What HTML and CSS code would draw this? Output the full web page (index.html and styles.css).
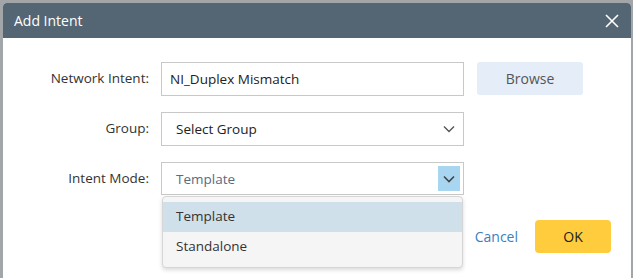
FILE: index.html
```html
<!DOCTYPE html>
<html lang="en">
<head>
    <meta charset="UTF-8">
    <meta name="viewport" content="width=device-width, initial-scale=1.0">
    <title>Add Intent</title>
    <link rel="stylesheet" href="styles.css">
</head>
<body>
    <div class="dialog">
        <header class="dialog-header">
            <h1>Add Intent</h1>
            <button class="close-button" aria-label="Close">
                <svg width="14" height="14" viewBox="0 0 14 14">
                    <path d="M1 1 L13 13 M13 1 L1 13" stroke="#fff" stroke-width="1.6" fill="none"/>
                </svg>
            </button>
        </header>

        <div class="dialog-body">
            <div class="row">
                <label class="row-label" for="intent">Network Intent:</label>
                <input id="intent" class="field" type="text" value="NI_Duplex Mismatch">
                <button class="browse-button">Browse</button>
            </div>

            <div class="row">
                <label class="row-label">Group:</label>
                <div class="field select">
                    <span>Select Group</span>
                    <span class="chevron">
                        <svg width="12" height="8" viewBox="0 0 12 8">
                            <path d="M1 1.5 L6 6.5 L11 1.5" stroke="#555" stroke-width="1.4" fill="none"/>
                        </svg>
                    </span>
                </div>
            </div>

            <div class="row">
                <label class="row-label">Intent Mode:</label>
                <div class="select-wrap">
                    <div class="field select open">
                        <span>Template</span>
                        <span class="chevron active">
                            <svg width="12" height="8" viewBox="0 0 12 8">
                                <path d="M1 1.5 L6 6.5 L11 1.5" stroke="#444" stroke-width="1.6" fill="none"/>
                            </svg>
                        </span>
                    </div>
                    <ul class="dropdown">
                        <li class="selected">Template</li>
                        <li>Standalone</li>
                    </ul>
                </div>
            </div>

            <div class="actions">
                <a class="cancel-link" href="#">Cancel</a>
                <button class="ok-button">OK</button>
            </div>
        </div>
    </div>
</body>
</html>
```

FILE: styles.css
```css
body {
    margin: 0;
    padding: 3px 2px 0 3px;
    background-color: #a3a6a8;
    font-family: "Open Sans", Arial, sans-serif;
    font-size: 13.5px;
    color: #333;
    height: 278px;
    box-sizing: border-box;
    overflow: hidden;
}

.dialog {
    background-color: #fff;
    border-radius: 4px 4px 0 0;
    height: 100%;
    overflow: hidden;
}

.dialog-header {
    display: flex;
    justify-content: space-between;
    align-items: center;
    height: 35px;
    padding: 0 12px 0 11px;
    background-color: #546673;
}

.dialog-header h1 {
    margin: 0;
    font-size: 14px;
    font-weight: normal;
    color: #fff;
}

.close-button {
    display: flex;
    background: none;
    border: none;
    padding: 0;
    cursor: pointer;
}

.dialog-body {
    padding: 24px 0 0 0;
}

.row {
    display: flex;
    align-items: flex-start;
    margin-bottom: 16px;
}

.row-label {
    width: 146px;
    padding-right: 12px;
    text-align: right;
    line-height: 33px;
    color: #333;
}

.field {
    width: 303px;
    height: 34px;
    box-sizing: border-box;
    border: 1px solid #c8c8c8;
    font-family: inherit;
    font-size: 13.5px;
    color: #222;
    padding: 0 8px;
    margin: 0;
}

.select {
    display: flex;
    justify-content: space-between;
    align-items: center;
    padding: 0 3px 0 14px;
    color: #222;
}

.select.open {
    height: 33px;
    color: #5b6b7b;
}

.chevron {
    display: flex;
    align-items: center;
    justify-content: center;
    width: 22px;
    height: 25px;
}

.chevron.active {
    background-color: #a8d6f1;
}

.browse-button {
    margin-left: 13px;
    width: 106px;
    height: 33px;
    border: none;
    border-radius: 3px;
    background-color: #e5edf8;
    font-family: inherit;
    font-size: 14px;
    color: #555;
    cursor: pointer;
}

.select-wrap {
    position: relative;
}

.dropdown {
    position: absolute;
    top: 34px;
    left: 1px;
    width: 301px;
    margin: 0;
    padding: 5px 0;
    list-style: none;
    background-color: #f5f5f5;
    border: 1px solid #d6d6d6;
    border-radius: 4px;
    box-shadow: 0 2px 4px rgba(0, 0, 0, 0.15);
    box-sizing: border-box;
    z-index: 2;
}

.dropdown li {
    height: 30px;
    line-height: 29px;
    padding-left: 13px;
    color: #333;
}

.dropdown li.selected {
    background-color: #cfe0ea;
}

.actions {
    display: flex;
    justify-content: flex-end;
    align-items: center;
    gap: 17px;
    padding: 9px 20px 0 0;
}

.cancel-link {
    color: #3a7fc1;
    text-decoration: none;
    font-size: 14px;
}

.ok-button {
    width: 76px;
    height: 33px;
    border: none;
    border-radius: 4px;
    background-color: #ffcc3d;
    font-family: inherit;
    font-size: 14px;
    color: #222;
    cursor: pointer;
}
```
